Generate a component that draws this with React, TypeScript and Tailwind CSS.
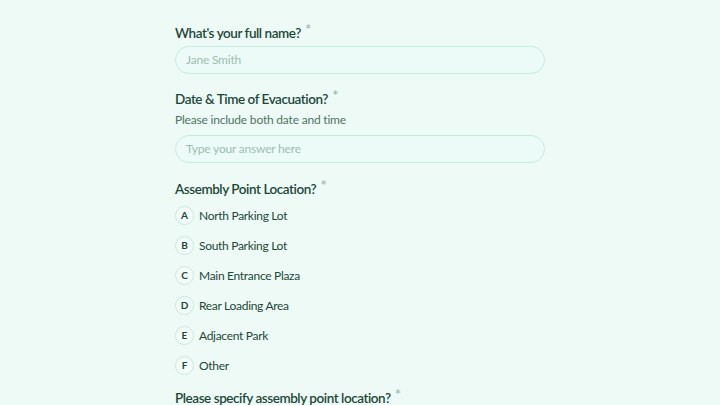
import React from "react";

const options = [
  ["A", "North Parking Lot"],
  ["B", "South Parking Lot"],
  ["C", "Main Entrance Plaza"],
  ["D", "Rear Loading Area"],
  ["E", "Adjacent Park"],
  ["F", "Other"],
];

function Label({ children }: { children: React.ReactNode }) {
  return (
    <div className="flex items-start text-[13.5px] leading-[18px] font-semibold tracking-[-0.45px] text-[#1d4838]">
      <span>{children}</span>
      <span className="ml-[4px] -mt-[4px] text-[16px] font-normal text-[#8fb7a9]">*</span>
    </div>
  );
}

function Input({ placeholder }: { placeholder: string }) {
  return (
    <div className="h-[28px] w-full rounded-full border border-[#c6ebdf] bg-[#ecfbf7] px-[10px] flex items-center text-[12px] tracking-[-0.2px] text-[#9cbdb1]">
      {placeholder}
    </div>
  );
}

export default function App() {
  return (
    <div
      className="w-[720px] h-[405px] overflow-hidden bg-[#eefaf6]"
      style={{ fontFamily: "Lato, 'Noto Sans', sans-serif" }}
    >
      <div className="ml-[175px] w-[370px] pt-[24px] flex flex-col">
        <Label>What's your full name?</Label>
        <div className="mt-[4px]">
          <Input placeholder="Jane Smith" />
        </div>
        <div className="mt-[16px]">
          <Label>Date &amp; Time of Evacuation?</Label>
        </div>
        <div className="mt-[4px] text-[12px] leading-[16px] tracking-[-0.2px] text-[#4f7466]">
          Please include both date and time
        </div>
        <div className="mt-[7px]">
          <Input placeholder="Type your answer here" />
        </div>
        <div className="mt-[17px]">
          <Label>Assembly Point Location?</Label>
        </div>
        <div className="mt-[8px] flex flex-col gap-[11px]">
          {options.map(([k, v]) => (
            <div key={k} className="flex items-center h-[19px]">
              <div className="w-[19px] h-[19px] rounded-full border border-[#c6ebdf] bg-[#f3fcf9] flex items-center justify-center text-[10px] font-bold text-[#1d4838]">
                {k}
              </div>
              <span className="ml-[5px] text-[12px] tracking-[-0.3px] text-[#1d4838]">{v}</span>
            </div>
          ))}
        </div>
        <div className="mt-[14px]">
          <Label>Please specify assembly point location?</Label>
        </div>
      </div>
    </div>
  );
}
